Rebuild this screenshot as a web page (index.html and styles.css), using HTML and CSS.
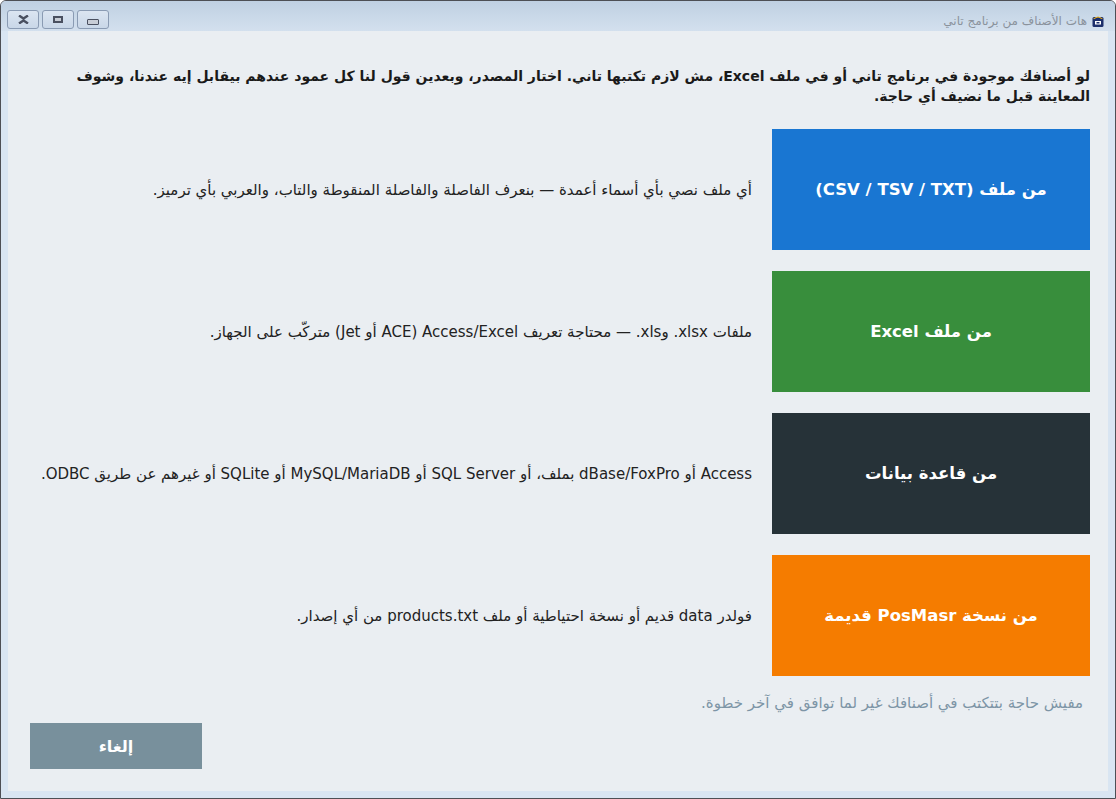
FILE: index.html
```html
<!DOCTYPE html>
<html lang="ar">
<head>
<meta charset="utf-8">
<title>هات الأصناف من برنامج تاني</title>
<link rel="stylesheet" href="styles.css">
</head>
<body>
<div class="window" dir="rtl">
  <div class="titlebar">
    <div class="title-left">
      <svg class="app-icon" width="12" height="12" viewBox="0 0 12 12">
        <rect x="0.5" y="2" width="11" height="10" rx="1.5" fill="#1c2f6b"/>
        <path d="M1 4 Q6 -1 11 4 L9.5 4 Q6 1 2.5 4 Z" fill="#f2b51c"/>
        <rect x="3" y="6" width="6" height="3.5" fill="#ffffff"/>
        <rect x="4.5" y="7" width="3" height="1.5" fill="#1c2f6b"/>
      </svg>
      <span class="title-text">هات الأصناف من برنامج تاني</span>
    </div>
    <div class="controls">
      <span class="ctl"><span class="ico-min"></span></span>
      <span class="ctl"><span class="ico-max"></span></span>
      <span class="ctl"><svg width="11" height="9" viewBox="0 0 11 9"><path d="M1 0.5 L5.5 3.5 L10 0.5 M1 8.5 L5.5 5.5 L10 8.5" stroke="#4a5060" stroke-width="2.4" fill="none"/></svg></span>
    </div>
  </div>
  <div class="client">
    <p class="intro">لو أصنافك موجودة في برنامج تاني أو في ملف Excel، مش لازم تكتبها تاني. اختار المصدر، وبعدين قول لنا كل عمود عندهم بيقابل إيه عندنا، وشوف المعاينة قبل ما نضيف أي حاجة.</p>
    <div class="options">
      <div class="option">
        <div class="opt-btn blue">من ملف (CSV / TSV / TXT)</div>
        <div class="opt-desc">أي ملف نصي بأي أسماء أعمدة — بنعرف الفاصلة والفاصلة المنقوطة والتاب، والعربي بأي ترميز.</div>
      </div>
      <div class="option">
        <div class="opt-btn green">من ملف Excel</div>
        <div class="opt-desc">ملفات xlsx. وxls. — محتاجة تعريف Access/Excel (ACE أو Jet) متركّب على الجهاز.</div>
      </div>
      <div class="option">
        <div class="opt-btn dark">من قاعدة بيانات</div>
        <div class="opt-desc">Access أو dBase/FoxPro بملف، أو SQL Server أو MySQL/MariaDB أو SQLite أو غيرهم عن طريق ODBC.</div>
      </div>
      <div class="option">
        <div class="opt-btn orange">من نسخة PosMasr قديمة</div>
        <div class="opt-desc">فولدر data قديم أو نسخة احتياطية أو ملف products.txt من أي إصدار.</div>
      </div>
    </div>
    <p class="note">مفيش حاجة بتتكتب في أصنافك غير لما توافق في آخر خطوة.</p>
    <div class="actions">
      <div class="cancel-btn">إلغاء</div>
    </div>
  </div>
</div>
</body>
</html>
```
FILE: styles.css
```css
html, body {
  margin: 0;
  padding: 0;
  background: #ffffff;
}
body {
  font-family: "DejaVu Sans", "Liberation Sans", sans-serif;
}
.window {
  box-sizing: border-box;
  width: 1116px;
  height: 799px;
  border: 1px solid #4d4f55;
  border-radius: 6px 6px 0 0;
  background: #d9e5f2;
  display: flex;
  flex-direction: column;
  overflow: hidden;
}
.titlebar {
  height: 30px;
  flex: none;
  display: flex;
  justify-content: space-between;
  align-items: flex-start;
  background: linear-gradient(#bfd0e2, #d3e0ee);
  padding: 0 11px 0 6px;
}
.title-left {
  display: flex;
  align-items: center;
  gap: 5px;
  height: 20px;
  margin-top: 10px;
}
.app-icon {
  display: block;
}
.title-text {
  font-family: "DejaVu Sans", sans-serif;
  font-size: 12px;
  color: #8a929c;
}
.controls {
  display: flex;
  gap: 3px;
  margin-top: 9px;
}
.ctl {
  box-sizing: border-box;
  width: 32px;
  height: 19px;
  border: 1px solid #8a9bb3;
  border-radius: 3px;
  background: linear-gradient(#dbe5f1, #c9d7e8);
  display: flex;
  align-items: center;
  justify-content: center;
}
.ico-min {
  width: 10px;
  height: 4px;
  border: 1px solid #4a5060;
  border-radius: 1px;
  background: #c8cdd6;
  margin-top: 4px;
}
.ico-max {
  box-sizing: border-box;
  width: 10px;
  height: 7px;
  border: 2px solid #4a5060;
  background: #c8cdd6;
}
.client {
  flex: 1;
  margin: 0 7px 7px 7px;
  background: #eaeef2;
  padding: 35px 18px 0 22px;
  display: flex;
  flex-direction: column;
}
.intro {
  margin: 0;
  font-size: 14px;
  font-weight: bold;
  line-height: 20px;
  color: #1a1a1a;
}
.options {
  display: flex;
  flex-direction: column;
  gap: 21px;
  margin-top: 23px;
}
.option {
  display: flex;
  align-items: center;
  gap: 20px;
}
.opt-btn {
  flex: none;
  width: 318px;
  height: 121px;
  display: flex;
  align-items: center;
  justify-content: center;
  color: #ffffff;
  font-weight: bold;
  font-size: 16.5px;
}
.blue { background: #1976d2; }
.green { background: #388e3c; }
.dark { background: #263238; }
.orange { background: #f57c00; }
.opt-desc {
  font-size: 15px;
  color: #222222;
}
.note {
  margin: 18px 7px 0 0;
  font-size: 15px;
  line-height: 18px;
  color: #7d95a6;
}
.actions {
  display: flex;
  justify-content: flex-end;
  margin-top: 11px;
}
.cancel-btn {
  width: 172px;
  height: 46px;
  background: #78909c;
  color: #ffffff;
  font-weight: bold;
  font-size: 16px;
  display: flex;
  align-items: center;
  justify-content: center;
}
```
